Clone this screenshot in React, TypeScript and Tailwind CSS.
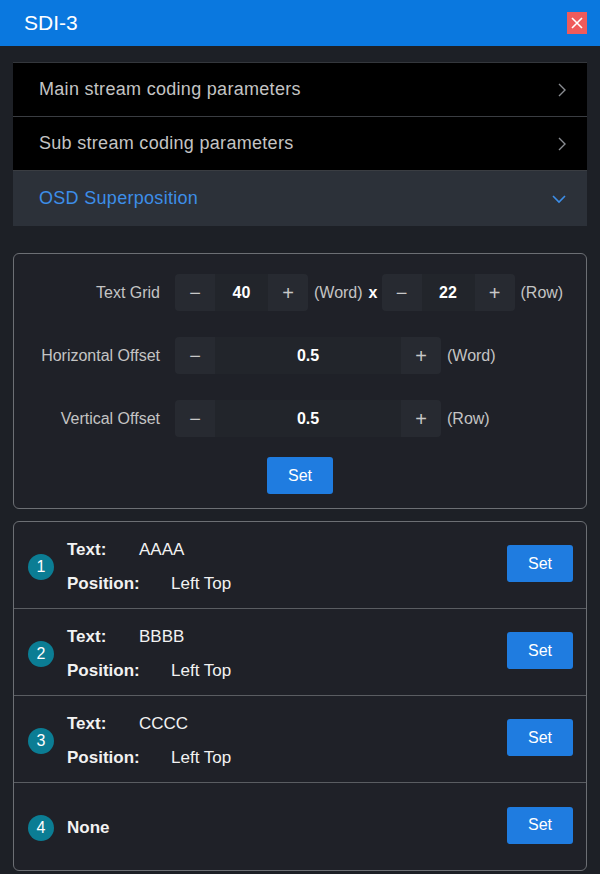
import { useState } from "react";

const sections = [
  { title: "Main stream coding parameters", open: false },
  { title: "Sub stream coding parameters", open: false },
  { title: "OSD Superposition", open: true },
];

const osdItems = [
  { id: 1, text: "AAAA", position: "Left Top" },
  { id: 2, text: "BBBB", position: "Left Top" },
  { id: 3, text: "CCCC", position: "Left Top" },
  { id: 4, text: null, position: null },
];

const ChevronRight = () => (
  <svg width="10" height="16" viewBox="0 0 10 16" fill="none">
    <polyline points="2,2 8,8 2,14" stroke="#8a8d92" strokeWidth="1.4" />
  </svg>
);

const ChevronDown = () => (
  <svg width="16" height="10" viewBox="0 0 16 10" fill="none">
    <polyline points="2,2 8,8 14,2" stroke="#3d8ee8" strokeWidth="1.6" />
  </svg>
);

// stepper: "-" | value | "+"
const Stepper = ({ value, wide }: { value: string; wide?: boolean }) => (
  <div
    className={`flex h-[37px] items-stretch overflow-hidden rounded-[4px] bg-[#22252b] ${
      wide ? "w-[266px]" : "w-[133px]"
    }`}
  >
    <button className="flex w-[40px] items-center justify-center bg-[#272a31] text-[20px] font-light text-[#c8c8c8]">
      −
    </button>
    <div className="flex flex-1 items-center justify-center text-[16px] font-bold text-white">
      {value}
    </div>
    <button className="flex w-[40px] items-center justify-center bg-[#272a31] text-[20px] font-light text-[#c8c8c8]">
      +
    </button>
  </div>
);

const SetButton = ({ className = "" }: { className?: string }) => (
  <button className={`h-[37px] w-[66px] rounded-[3px] bg-[#1f7ce0] text-[16px] text-white ${className}`}>
    Set
  </button>
);

export default function App() {
  const [active] = useState(2);
  return (
    <div
      className="flex h-[874px] w-[600px] flex-col bg-[#1d2026]"
      style={{ fontFamily: '"Liberation Sans", Arial, sans-serif' }}
    >
      {/* header */}
      <div className="flex h-[46px] items-center justify-between bg-[#0a78df] pl-[24px] pr-[13px]">
        <span className="text-[21px] text-white">SDI-3</span>
        <button className="flex h-[22px] w-[20px] items-center justify-center bg-[#ef5b5b]">
          <svg width="12" height="12" viewBox="0 0 12 12">
            <path d="M1 1L11 11M11 1L1 11" stroke="#fff" strokeWidth="1.6" />
          </svg>
        </button>
      </div>

      <div className="flex flex-col px-[13px] pt-[16px]">
        {/* accordion */}
        <div className="flex flex-col border-t border-[#34373c]">
          {sections.map((s, i) => (
            <div
              key={s.title}
              className={`flex h-[54px] items-center justify-between pl-[26px] pr-[20px] ${
                i === active ? "bg-[#2c3139]" : "bg-black"
              } ${i < sections.length - 1 ? "border-b border-[#3a3d42]" : "h-[55px]"}`}
            >
              <span
                className={`text-[18px] tracking-[0.3px] ${
                  s.open ? "text-[#3d8ee8]" : "text-[#c4c4c4]"
                }`}
              >
                {s.title}
              </span>
              {s.open ? <ChevronDown /> : <ChevronRight />}
            </div>
          ))}
        </div>

        {/* osd grid settings */}
        <div className="mt-[27px] flex flex-col gap-[26px] rounded-[6px] border border-[#6c6f74] bg-[#1f2128] pb-[14px] pt-[20px]">
          <div className="flex items-center">
            <span className="w-[146px] text-right text-[16px] text-[#c4c4c4]">Text Grid</span>
            <div className="ml-[15px] flex items-center">
              <Stepper value="40" />
              <span className="ml-[6px] text-[16px] text-[#c4c4c4]">(Word)</span>
              <span className="ml-[6px] mr-[4px] text-[16px] font-bold text-white">x</span>
              <Stepper value="22" />
              <span className="ml-[6px] text-[16px] text-[#c4c4c4]">(Row)</span>
            </div>
          </div>
          <div className="flex items-center">
            <span className="w-[146px] text-right text-[16px] text-[#c4c4c4]">Horizontal Offset</span>
            <div className="ml-[15px] flex items-center">
              <Stepper value="0.5" wide />
              <span className="ml-[6px] text-[16px] text-[#c4c4c4]">(Word)</span>
            </div>
          </div>
          <div className="flex items-center">
            <span className="w-[146px] text-right text-[16px] text-[#c4c4c4]">Vertical Offset</span>
            <div className="ml-[15px] flex items-center">
              <Stepper value="0.5" wide />
              <span className="ml-[6px] text-[16px] text-[#c4c4c4]">(Row)</span>
            </div>
          </div>
          <div className="-mt-[6px] flex justify-center">
            <SetButton />
          </div>
        </div>

        {/* osd items */}
        <div className="mt-[12px] flex flex-col rounded-[6px] border border-[#6c6f74] bg-[#1f2128]">
          {osdItems.map((item, i) => (
            <div
              key={item.id}
              className={`flex h-[87px] items-center pl-[14px] pr-[13px] ${
                i < osdItems.length - 1 ? "border-b border-[#5a5d62]" : "h-[84px]"
              }`}
            >
              <div className="mt-[3px] flex h-[26px] w-[26px] items-center justify-center rounded-full bg-[#0b7d94] text-[16px] text-white">
                {item.id}
              </div>
              <div className="ml-[13px] mt-[3px] flex flex-1 flex-col gap-[8px] text-[17px] text-[#f2f2f2]">
                {item.text ? (
                  <>
                    <div className="flex">
                      <span className="w-[72px] font-bold">Text:</span>
                      <span>{item.text}</span>
                    </div>
                    <div className="flex">
                      <span className="w-[104px] font-bold">Position:</span>
                      <span>{item.position}</span>
                    </div>
                  </>
                ) : (
                  <span className="font-bold">None</span>
                )}
              </div>
              <SetButton className="mb-[3px]" />
            </div>
          ))}
        </div>
      </div>
    </div>
  );
}
